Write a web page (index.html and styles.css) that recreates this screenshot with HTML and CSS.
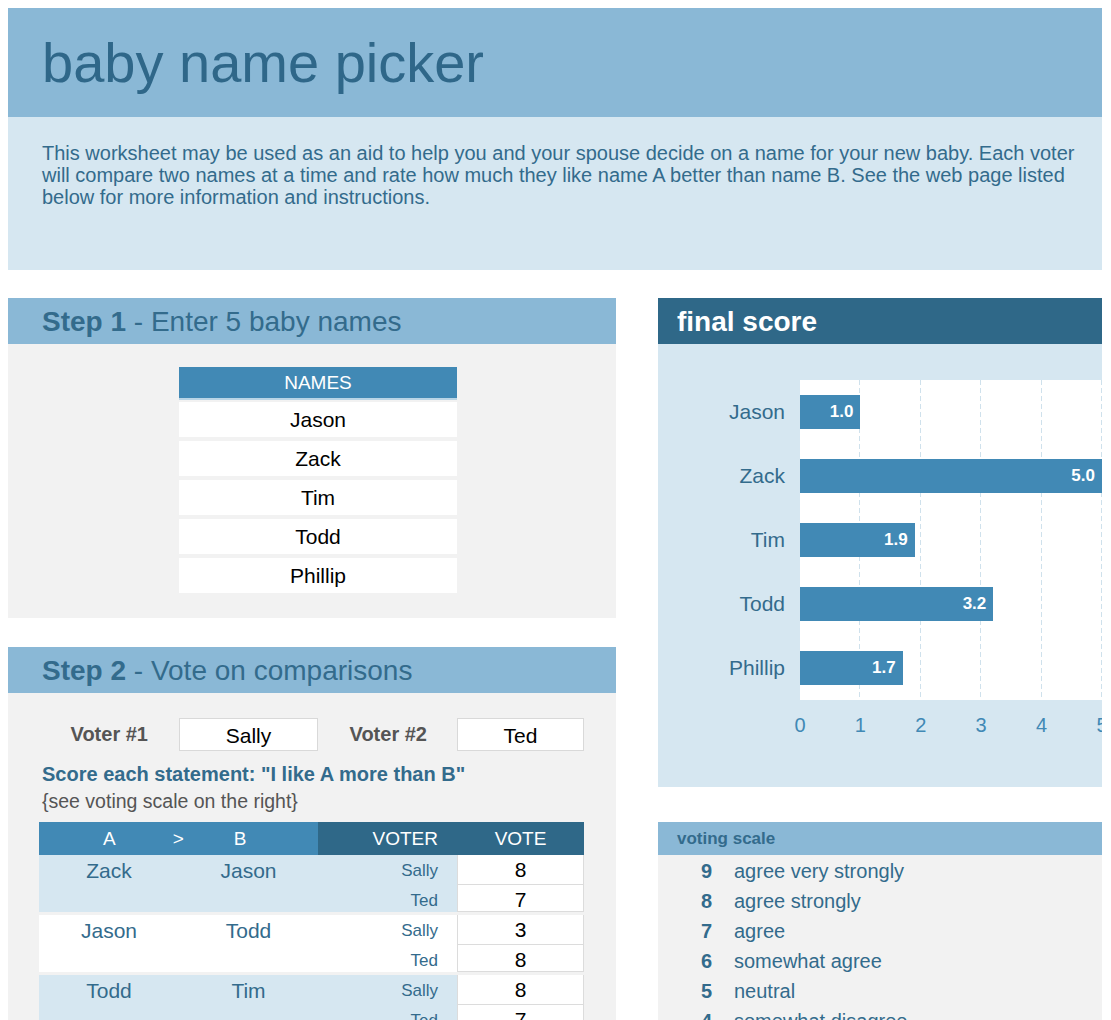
FILE: index.html
```html
<!DOCTYPE html>
<html lang="en">
<head>
    <meta charset="UTF-8">
    <meta name="viewport" content="width=device-width, initial-scale=1.0">
    <title>Baby Name Picker</title>
    <link rel="stylesheet" href="styles.css">
</head>
<body>
    <div class="page">
        <header class="banner">
            <h1>baby name picker</h1>
        </header>
        <div class="intro">
            <p>This worksheet may be used as an aid to help you and your spouse decide on a name for your new baby. Each voter will compare two names at a time and rate how much they like name A better than name B. See the web page listed below for more information and instructions.</p>
        </div>

        <div class="columns">
            <div class="col-left">
                <section class="step">
                    <h2 class="step-title"><b>Step 1</b> - Enter 5 baby names</h2>
                    <div class="step-body names-body">
                        <div class="names">
                            <div class="names-head">NAMES</div>
                            <div class="name-cell">Jason</div>
                            <div class="name-cell">Zack</div>
                            <div class="name-cell">Tim</div>
                            <div class="name-cell">Todd</div>
                            <div class="name-cell">Phillip</div>
                        </div>
                    </div>
                </section>

                <section class="step step-two">
                    <h2 class="step-title"><b>Step 2</b> - Vote on comparisons</h2>
                    <div class="step-body vote-body">
                        <div class="voters">
                            <span class="voter-label">Voter #1</span>
                            <span class="voter-box">Sally</span>
                            <span class="voter-label">Voter #2</span>
                            <span class="voter-box">Ted</span>
                        </div>
                        <p class="instruction">Score each statement: "I like A more than B"</p>
                        <p class="note">{see voting scale on the right}</p>

                        <div class="votes">
                            <div class="votes-head">
                                <div class="pair-head"><span>A</span><span class="gt">&gt;</span><span>B</span></div>
                                <div class="voter-head">VOTER</div>
                                <div class="vote-head">VOTE</div>
                            </div>
                            <div id="voteRows"></div>
                        </div>
                    </div>
                </section>
            </div>

            <div class="col-right">
                <section class="score">
                    <h2 class="score-title">final score</h2>
                    <div class="score-body">
                        <div class="chart">
                            <div class="chart-labels" id="chartLabels"></div>
                            <div class="plot" id="plot"></div>
                            <div class="axis">
                                <span>0</span><span>1</span><span>2</span><span>3</span><span>4</span><span>5</span>
                            </div>
                        </div>
                    </div>
                </section>

                <section class="scale">
                    <h3 class="scale-title">voting scale</h3>
                    <ul class="scale-list" id="scaleList"></ul>
                </section>
            </div>
        </div>
    </div>

    <script>
        const scores = [
            ['Jason', 1.0],
            ['Zack', 5.0],
            ['Tim', 1.9],
            ['Todd', 3.2],
            ['Phillip', 1.7]
        ];

        const comparisons = [
            ['Zack', 'Jason', 8, 7],
            ['Jason', 'Todd', 3, 8],
            ['Todd', 'Tim', 8, 7],
            ['Tim', 'Phillip', 6, 5],
            ['Phillip', 'Zack', 2, 3]
        ];

        const scale = [
            [9, 'agree very strongly'],
            [8, 'agree strongly'],
            [7, 'agree'],
            [6, 'somewhat agree'],
            [5, 'neutral'],
            [4, 'somewhat disagree'],
            [3, 'disagree'],
            [2, 'disagree strongly'],
            [1, 'disagree very strongly']
        ];

        const labels = document.getElementById('chartLabels');
        const plot = document.getElementById('plot');
        scores.forEach(function (s) {
            const label = document.createElement('div');
            label.className = 'chart-label';
            label.textContent = s[0];
            labels.appendChild(label);

            const row = document.createElement('div');
            row.className = 'bar-row';
            row.innerHTML = `<div class="bar" style="width: ${s[1] / 5 * 100}%">${s[1].toFixed(1)}</div>`;
            plot.appendChild(row);
        });

        const rows = document.getElementById('voteRows');
        comparisons.forEach(function (c, i) {
            const group = document.createElement('div');
            group.className = 'vote-group' + (i % 2 === 1 ? ' alt' : '');
            group.innerHTML = `
                <div class="name-a">${c[0]}</div>
                <div class="name-b">${c[1]}</div>
                <div class="voter-name">Sally</div>
                <div class="vote-cell">${c[2]}</div>
                <div class="voter-name">Ted</div>
                <div class="vote-cell">${c[3]}</div>
            `;
            rows.appendChild(group);
        });

        const list = document.getElementById('scaleList');
        scale.forEach(function (s) {
            const item = document.createElement('li');
            item.innerHTML = `<b>${s[0]}</b><span>${s[1]}</span>`;
            list.appendChild(item);
        });
    </script>
</body>
</html>
```

FILE: styles.css
```css
html, body {
    overflow: hidden;
}
body {
    margin: 8px;
    font-family: 'Liberation Sans', Arial, sans-serif;
    color: #336b8c;
    background: #fff;
}
.page {
    width: 1094px;
}
h1, h2, h3, p, ul {
    margin: 0;
    padding: 0;
}

/* top banner */
.banner {
    height: 109px;
    display: flex;
    align-items: center;
    padding: 0 34px;
    background: #8ab8d6;
}
.banner h1 {
    font-size: 56px;
    font-weight: normal;
    line-height: 1;
    color: #2f6789;
}
.intro {
    height: 153px;
    box-sizing: border-box;
    padding: 25px 12px 0 34px;
    background: #d6e7f1;
    font-size: 20px;
    line-height: 22px;
}

/* columns */
.columns {
    display: flex;
    gap: 42px;
    margin-top: 28px;
    align-items: flex-start;
}
.col-left {
    width: 608px;
}
.col-right {
    width: 444px;
}

.step-title {
    height: 46px;
    line-height: 48px;
    padding-left: 34px;
    background: #8ab8d6;
    font-size: 28px;
    font-weight: normal;
    color: #336b8c;
}
.step-body {
    background: #f2f2f2;
}

/* step 1 */
.names-body {
    padding: 23px 0 25px 171px;
}
.names {
    width: 278px;
    display: flex;
    flex-direction: column;
    gap: 4px;
}
.names-head {
    height: 31px;
    line-height: 32px;
    text-align: center;
    background: #4189b5;
    color: #fff;
    font-size: 19px;
    box-shadow: 0 2px 0 #b9d5e6;
}
.name-cell {
    height: 35px;
    line-height: 35px;
    text-align: center;
    background: #fff;
    color: #000;
    font-size: 21px;
}

/* step 2 */
.step-two {
    margin-top: 29px;
}
.vote-body {
    padding-top: 25px;
    padding-bottom: 40px;
}
.voters {
    display: grid;
    grid-template-columns: 171px 139px 139px 127px;
    align-items: center;
}
.voter-label {
    text-align: right;
    font-size: 20px;
    font-weight: bold;
    color: #555;
    padding-right: 31px;
}
.voter-label:nth-child(3) {
    padding-right: 30px;
}
.voter-box {
    height: 33px;
    line-height: 33px;
    box-sizing: border-box;
    border: 1px solid #d9d9d9;
    background: #fff;
    color: #000;
    font-size: 21px;
    text-align: center;
}
.instruction {
    margin-top: 12px;
    padding-left: 34px;
    font-size: 20px;
    font-weight: bold;
    line-height: 22px;
}
.note {
    margin-top: 5px;
    padding-left: 34px;
    font-size: 19.5px;
    line-height: 22px;
    color: #555;
}
.votes {
    margin: 10px 0 0 31px;
    width: 545px;
}
.votes-head {
    display: grid;
    grid-template-columns: 279px 139px 127px;
    height: 33px;
    line-height: 33px;
    color: #fff;
    font-size: 19px;
}
.pair-head {
    display: flex;
    padding-left: 64px;
    background: #4189b5;
}
.pair-head .gt {
    margin: 0 50px 0 57px;
}
.voter-head {
    background: #2f6888;
    text-align: right;
    padding-right: 19px;
}
.vote-head {
    background: #2f6888;
    text-align: center;
}
.vote-group {
    display: grid;
    grid-template-columns: 140px 139px 139px 127px;
    grid-template-rows: 30px 27px;
    margin-bottom: 3px;
    background: linear-gradient(90deg, #d6e7f1 418px, #fff 418px);
}
.vote-group.alt {
    background: #fff;
}
.name-a, .name-b {
    grid-row: 1 / 3;
    text-align: center;
    font-size: 21px;
    line-height: 32px;
}
.name-a {
    grid-column: 1;
}
.name-b {
    grid-column: 2;
}
.voter-name {
    grid-column: 3;
    text-align: right;
    padding-right: 19px;
    font-size: 17px;
    line-height: 31px;
}
.vote-cell {
    grid-column: 4;
    text-align: center;
    font-size: 21px;
    line-height: 29px;
    color: #000;
    background: #fff;
    border: 1px solid #dcdcdc;
    border-top: none;
}

/* final score */
.score {
    overflow: hidden;
}
.score-title {
    height: 46px;
    line-height: 48px;
    padding-left: 19px;
    background: #2f6888;
    color: #fff;
    font-size: 28px;
}
.score-body {
    height: 443px;
    box-sizing: border-box;
    padding-top: 36px;
    background: #d6e7f1;
}
.chart {
    display: grid;
    grid-template-columns: 127px 302px;
    column-gap: 15px;
}
.chart-labels {
    display: flex;
    flex-direction: column;
}
.chart-label {
    height: 64px;
    line-height: 64px;
    text-align: right;
    font-size: 21px;
}
.plot {
    background:
        repeating-linear-gradient(180deg, transparent 0 5px, #fff 5px 8px),
        repeating-linear-gradient(90deg, transparent 0 59.4px, #cfe1ec 59.4px 60.4px),
        #fff;
}
.bar-row {
    height: 64px;
    display: flex;
    align-items: center;
}
.bar {
    height: 34px;
    line-height: 34px;
    box-sizing: border-box;
    padding-right: 7px;
    text-align: right;
    background: #4189b5;
    color: #fff;
    font-size: 17px;
    font-weight: bold;
}
.axis {
    grid-column: 2;
    display: flex;
    margin: 13px 0 0 -30.2px;
    color: #4189b5;
    font-size: 20px;
    line-height: 24px;
}
.axis span {
    flex: 0 0 60.4px;
    text-align: center;
}

/* voting scale */
.scale {
    margin-top: 35px;
}
.scale-title {
    height: 33px;
    line-height: 34px;
    padding-left: 19px;
    background: #8ab8d6;
    font-size: 17px;
}
.scale-list {
    list-style: none;
    background: #f2f2f2;
    padding: 1px 0 20px;
}
.scale-list li {
    display: flex;
    height: 30px;
    line-height: 30px;
    font-size: 20px;
}
.scale-list b {
    width: 54px;
    text-align: right;
    margin-right: 22px;
}
```
